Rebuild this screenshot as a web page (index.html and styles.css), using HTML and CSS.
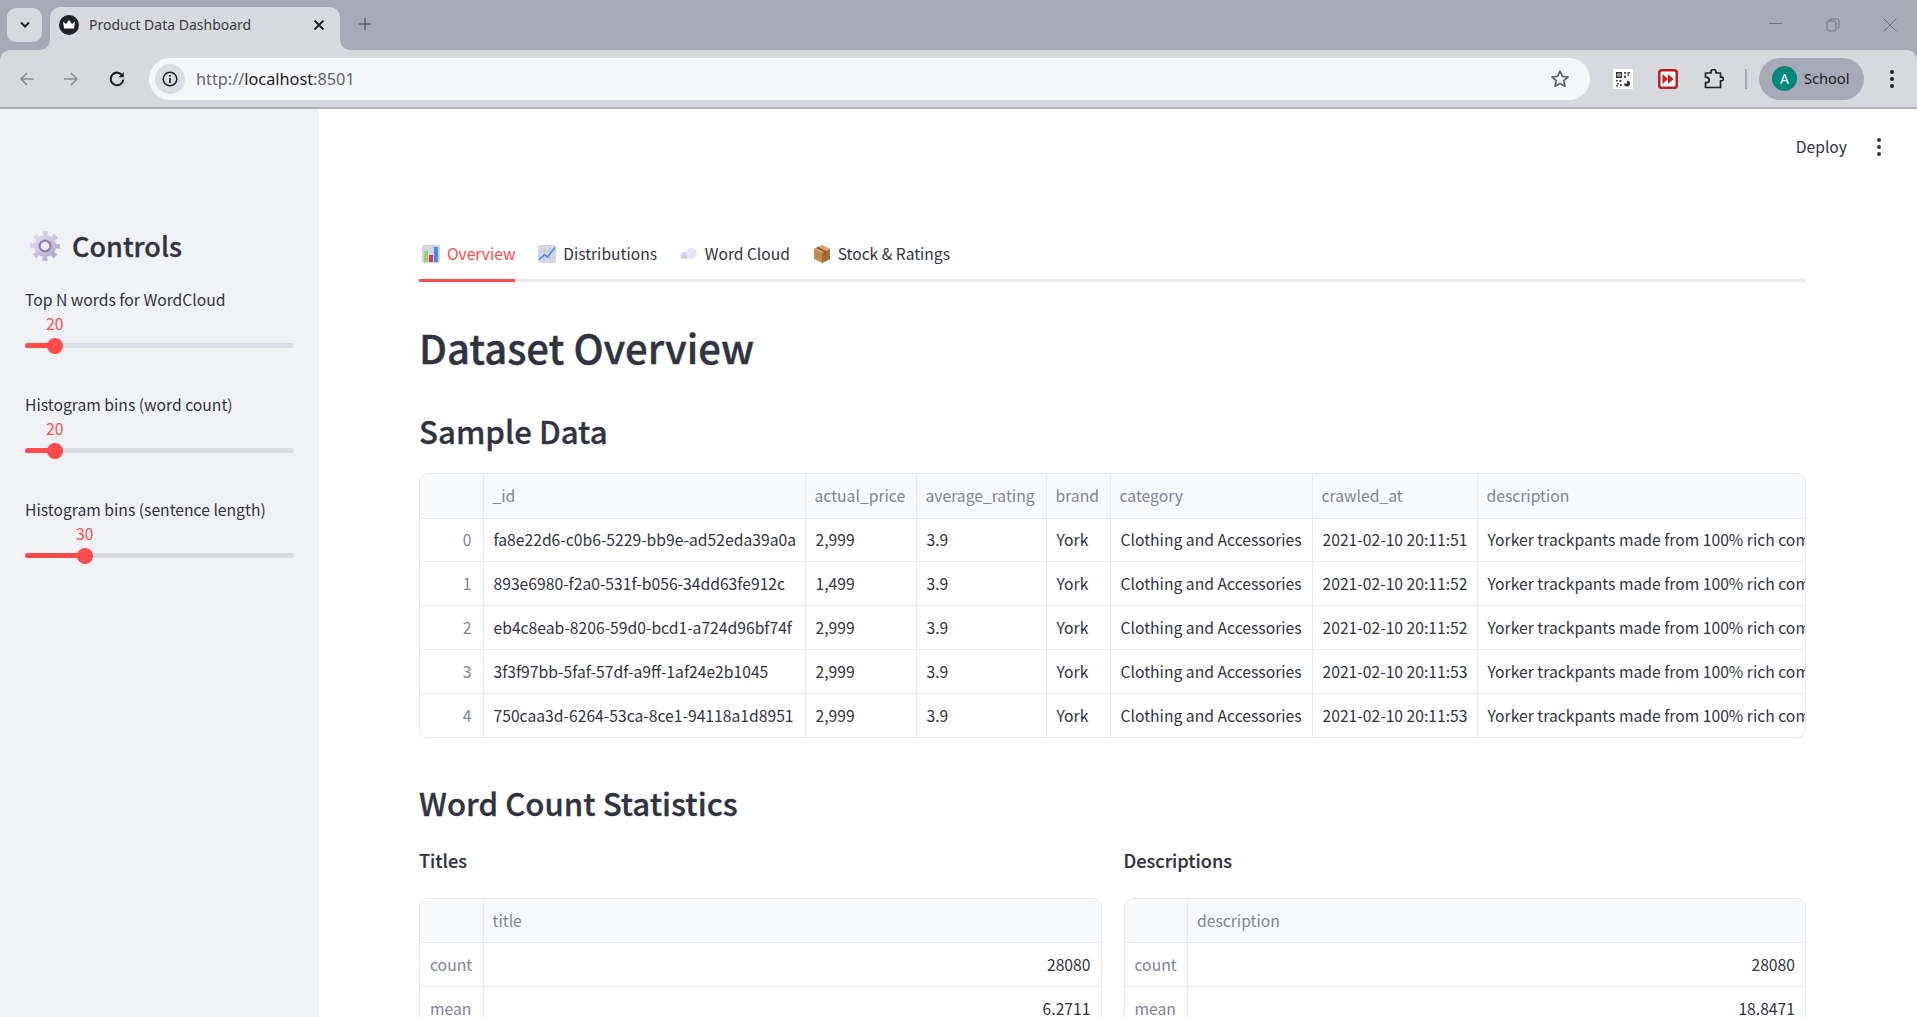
FILE: index.html
```html
<!DOCTYPE html>
<html lang="en">
<head>
<meta charset="utf-8">
<title>Product Data Dashboard</title>
<link rel="stylesheet" href="styles.css">
</head>
<body>
<div class="chrome">
  <div class="tabstrip">
    <div class="tabsearch"><svg width="12" height="8" viewBox="0 0 12 8"><path d="M2 1.500 6 5.500 10 1.500" fill="none" stroke="#202124" stroke-width="2"/></svg></div>
    <div class="tab">
      <svg class="favicon" width="20" height="20" viewBox="0 0 20 20"><circle cx="10" cy="10" r="10" fill="#20212a"/><path d="M4 6.500 7 9 10 5 13 9 16 6.500 15 13.500H5Z" fill="#fff"/></svg>
      <span class="tabtitle">Product Data Dashboard</span>
      <svg class="tabclose" width="12" height="12" viewBox="0 0 12 12"><path d="M1.500 1.500 10.500 10.500M10.500 1.500 1.500 10.500" stroke="#202124" stroke-width="1.800"/></svg>
    </div>
    <svg class="newtab" width="14" height="14" viewBox="0 0 14 14"><path d="M7 1V13M1 7H13" stroke="#5f6368" stroke-width="1.600"/></svg>
    <div class="winbtns">
      <svg width="14" height="14" viewBox="0 0 14 14"><path d="M0 5.500H13" stroke="#6f7380" stroke-width="1"/></svg>
      <svg width="14" height="14" viewBox="0 0 14 14"><rect x="1" y="3" width="9" height="10" rx="2" fill="none" stroke="#6f7380"/><path d="M3.500 3V2.500A1.500 1.500 0 0 1 5 1H11.500A1.500 1.500 0 0 1 13 2.500V9A1.500 1.500 0 0 1 11.500 10.500" fill="none" stroke="#6f7380"/></svg>
      <svg width="14" height="14" viewBox="0 0 14 14"><path d="M.5.5 13.500 13.500M13.500.5 .5 13.500" stroke="#6f7380" stroke-width="1"/></svg>
    </div>
  </div>
  <div class="toolbar">
    <svg class="nav-back" width="18" height="18" viewBox="0 0 18 18"><path d="M16 9H3M9 3 3 9 9 15" fill="none" stroke="#8b8d92" stroke-width="1.600"/></svg>
    <svg class="nav-forward" width="18" height="18" viewBox="0 0 18 18"><path d="M2 9H15M9 3 15 9 9 15" fill="none" stroke="#8b8d92" stroke-width="1.600"/></svg>
    <svg class="nav-reload" width="18" height="18" viewBox="0 0 18 18"><path d="M14.600 6A6.300 6.300 0 1 0 15.300 9.500" fill="none" stroke="#202124" stroke-width="2"/><path d="M15.800 2V7.200H10.600Z" fill="#202124"/></svg>
    <div class="omnibox">
      <div class="siteinfo"><svg width="16" height="16" viewBox="0 0 16 16"><circle cx="8" cy="8" r="6.800" fill="none" stroke="#202124" stroke-width="1.500"/><path d="M8 7V12M8 4V5.700" stroke="#202124" stroke-width="1.700"/></svg></div>
      <span class="url"><span class="urlfade">http://</span><span class="urlhost">localhost</span><span class="urlfade">:8501</span></span>
      <svg class="star" width="20" height="20" viewBox="0 0 20 20"><path d="M10 2.200 12.300 7.400 18 8 13.700 11.700 15 17.300 10 14.400 5 17.300 6.300 11.700 2 8 7.700 7.400Z" fill="none" stroke="#5f6368" stroke-width="1.700" stroke-linejoin="round"/></svg>
    </div>
    <svg class="ext ext-qr" width="20" height="20" viewBox="0 0 20 20">
      <rect width="20" height="20" rx="1" fill="#fff"/>
      <path d="M3 3H9V9H3ZM4.400 4.400V7.600H7.600V4.400Z" fill="#333" fill-rule="evenodd"/>
      <rect x="5.300" y="5.300" width="1.400" height="1.400" fill="#333"/>
      <path d="M11 3H13V5H11ZM14.500 3H17V4.500H15.800V7H14.500ZM11 6.500H13V9H11Z" fill="#555"/>
      <path d="M3 11H5V12.500H3ZM6.500 11H8.500V13H6.500ZM4 14H6V15.500H4ZM7 15H9V17H7ZM3 16H5V17.500H3Z" fill="#555"/>
      <path d="M14 11.500A3 3 0 1 1 11 14.500H14Z" fill="#333"/>
    </svg>
    <svg class="ext ext-ff" width="20" height="20" viewBox="0 0 20 20"><rect width="20" height="20" rx="3.500" fill="#b8211f"/><rect x="2.500" y="2.500" width="15" height="15" rx="1.500" fill="#fff"/><path d="M4.500 5 10 10 4.500 15ZM10 5 15.500 10 10 15Z" fill="#c9201d"/></svg>
    <svg class="ext ext-puzzle" width="20" height="20" viewBox="0 0 20 20"><path d="M1.500 4H7V3A2.500 2.500 0 0 1 12 3V4H16.500V8.200H17.500A1.800 1.800 0 0 1 17.500 11.800H16.500V18.500H1.500V13.700H2.500A2.700 2.700 0 0 0 2.500 8.300H1.500Z" fill="none" stroke="#202124" stroke-width="1.700" stroke-linejoin="round"/></svg>
    <div class="tooldivider"></div>
    <div class="profile">
      <span class="avatar">A</span>
      <span class="profilename">School</span>
    </div>
    <svg class="chromemenu" width="6" height="20" viewBox="0 0 6 20"><circle cx="3" cy="3" r="2" fill="#202124"/><circle cx="3" cy="10" r="2" fill="#202124"/><circle cx="3" cy="17" r="2" fill="#202124"/></svg>
  </div>
</div>

<div class="app">
  <aside class="sidebar">
    <div class="side-title">
      <svg class="gear" width="30" height="30" viewBox="0 0 30 30">
        <defs><linearGradient id="gearfill" x1="0" y1="0" x2="1" y2="1"><stop offset="0" stop-color="#e4dff0"/><stop offset="1" stop-color="#b3a7cd"/></linearGradient></defs>
        <circle class="gear-teeth" cx="15" cy="15" r="12.500" fill="none" stroke="url(#gearfill)" stroke-width="5" stroke-dasharray="5 4.820" stroke-dashoffset="2.500"/>
        <circle cx="15" cy="15" r="11" fill="url(#gearfill)"/>
        <circle cx="15" cy="15" r="6.500" fill="#8d7fa8"/><circle cx="15" cy="15" r="4.300" fill="#eceef4"/>
      </svg>
      <h2>Controls</h2>
    </div>
    <div class="slider">
      <label>Top N words for WordCloud</label>
      <div class="track-wrap short">
        <span class="thumbval">20</span>
        <div class="track"><div class="fill"></div><div class="thumb"></div></div>
      </div>
    </div>
    <div class="slider">
      <label>Histogram bins (word count)</label>
      <div class="track-wrap short">
        <span class="thumbval">20</span>
        <div class="track"><div class="fill"></div><div class="thumb"></div></div>
      </div>
    </div>
    <div class="slider">
      <label>Histogram bins (sentence length)</label>
      <div class="track-wrap long">
        <span class="thumbval">30</span>
        <div class="track"><div class="fill"></div><div class="thumb"></div></div>
      </div>
    </div>
  </aside>

  <main class="main">
    <header class="topbar">
      <span class="deploy">Deploy</span>
      <svg class="kebab" width="6" height="20" viewBox="0 0 6 20"><circle cx="3" cy="3" r="2" fill="#31333f"/><circle cx="3" cy="10" r="2" fill="#31333f"/><circle cx="3" cy="17" r="2" fill="#31333f"/></svg>
    </header>
    <div class="content">
      <nav class="tabs">
        <div class="st-tab active">
          <svg width="18" height="18" viewBox="0 0 18 18"><rect width="18" height="18" rx="2" fill="#d4d3de"/><rect x="2" y="6" width="4" height="11" fill="#8fd46e"/><rect x="7" y="10" width="4" height="7" fill="#e0306a"/><rect x="12" y="2" width="4" height="15" fill="#3a8fe0"/></svg>
          <span>Overview</span>
        </div>
        <div class="st-tab">
          <svg width="18" height="18" viewBox="0 0 18 18"><rect width="18" height="18" rx="2" fill="#d9d6e6"/><path d="M6 0V18M12 0V18M0 6H18M0 12H18" stroke="#c4c0d6" stroke-width=".8"/><path d="M1 15 6.500 9.500 9.500 12 17 2.500" fill="none" stroke="#3a8fe0" stroke-width="1.600"/></svg>
          <span>Distributions</span>
        </div>
        <div class="st-tab">
          <svg width="18" height="18" viewBox="0 0 18 18"><ellipse cx="5" cy="10.500" rx="4.500" ry="3.500" fill="#d3cfea"/><circle cx="11.500" cy="8.500" r="5.500" fill="#e6e4f4"/></svg>
          <span>Word Cloud</span>
        </div>
        <div class="st-tab">
          <svg width="18" height="18" viewBox="0 0 18 18"><path d="M9 0 17 4V14L9 18 1 14V4Z" fill="#c08a55"/><path d="M9 8 17 4V14L9 18Z" fill="#a36c3a"/><path d="M1 4 9 0 17 4 9 8Z" fill="#d8a875"/><path d="M5 2 13 6V9L11 10V7L3 3Z" fill="#8a5a30"/></svg>
          <span>Stock &amp; Ratings</span>
        </div>
      </nav>

      <h1>Dataset Overview</h1>
      <h2 class="sec first">Sample Data</h2>

      <div class="frame">
        <table class="sample">
          <colgroup>
            <col class="c-idx"><col class="c-id"><col class="c-price"><col class="c-rating"><col class="c-brand"><col class="c-cat"><col class="c-crawl"><col class="c-desc">
          </colgroup>
          <thead><tr><th></th><th>_id</th><th>actual_price</th><th>average_rating</th><th>brand</th><th>category</th><th>crawled_at</th><th>description</th></tr></thead>
          <tbody>
            <tr><th>0</th><td>fa8e22d6-c0b6-5229-bb9e-ad52eda39a0a</td><td>2,999</td><td>3.9</td><td>York</td><td>Clothing and Accessories</td><td>2021-02-10 20:11:51</td><td>Yorker trackpants made from 100% rich combed cotton</td></tr>
            <tr><th>1</th><td>893e6980-f2a0-531f-b056-34dd63fe912c</td><td>1,499</td><td>3.9</td><td>York</td><td>Clothing and Accessories</td><td>2021-02-10 20:11:52</td><td>Yorker trackpants made from 100% rich combed cotton</td></tr>
            <tr><th>2</th><td>eb4c8eab-8206-59d0-bcd1-a724d96bf74f</td><td>2,999</td><td>3.9</td><td>York</td><td>Clothing and Accessories</td><td>2021-02-10 20:11:52</td><td>Yorker trackpants made from 100% rich combed cotton</td></tr>
            <tr><th>3</th><td>3f3f97bb-5faf-57df-a9ff-1af24e2b1045</td><td>2,999</td><td>3.9</td><td>York</td><td>Clothing and Accessories</td><td>2021-02-10 20:11:53</td><td>Yorker trackpants made from 100% rich combed cotton</td></tr>
            <tr><th>4</th><td>750caa3d-6264-53ca-8ce1-94118a1d8951</td><td>2,999</td><td>3.9</td><td>York</td><td>Clothing and Accessories</td><td>2021-02-10 20:11:53</td><td>Yorker trackpants made from 100% rich combed cotton</td></tr>
          </tbody>
        </table>
      </div>

      <h2 class="sec second">Word Count Statistics</h2>

      <div class="columns">
        <section>
          <h3>Titles</h3>
          <div class="frame">
            <table class="stats">
              <colgroup><col class="c-idx"><col></colgroup>
              <thead><tr><th></th><th>title</th></tr></thead>
              <tbody>
                <tr><th>count</th><td>28080</td></tr>
                <tr><th>mean</th><td>6.2711</td></tr>
              </tbody>
            </table>
          </div>
        </section>
        <section>
          <h3>Descriptions</h3>
          <div class="frame">
            <table class="stats">
              <colgroup><col class="c-idx"><col></colgroup>
              <thead><tr><th></th><th>description</th></tr></thead>
              <tbody>
                <tr><th>count</th><td>28080</td></tr>
                <tr><th>mean</th><td>18.8471</td></tr>
              </tbody>
            </table>
          </div>
        </section>
      </div>
    </div>
  </main>
</div>
</body>
</html>
```
FILE: styles.css
```css
* { box-sizing: border-box; }
html, body { margin: 0; height: 100%; overflow: hidden; }
body { display: flex; flex-direction: column; background: #fff; font-family: "Noto Sans CJK SC", "Noto Sans", sans-serif; color: #31333f; }

/* browser chrome */
.chrome { flex: none; height: 109px; background: #a7aab6; font-family: "Noto Sans", "Liberation Sans", sans-serif; border-bottom: 2px solid #b0b1b8; }
.tabstrip { height: 50px; display: flex; align-items: flex-start; padding: 8px 0 0 7px; }
.tabsearch { flex: none; width: 35px; height: 34px; background: #d7d9df; border-radius: 9px; display: flex; align-items: center; justify-content: center; }
.tab { flex: none; width: 290px; height: 43px; margin: -1px 0 0 8px; background: #d7d9df; border-radius: 10px 10px 0 0; display: flex; align-items: center; padding: 0 15px 7px 9px; position: relative; }
.tab::before, .tab::after { content: ""; position: absolute; bottom: 0; width: 10px; height: 10px; background: radial-gradient(circle at 0 0, transparent 9.500px, #d7d9df 10px); }
.tab::before { left: -10px; }
.tab::after { right: -10px; background: radial-gradient(circle at 100% 0, transparent 9.500px, #d7d9df 10px); }
.favicon { flex: none; }
.tabtitle { margin-left: 10px; flex: 1; font-size: 14px; line-height: 20px; color: #3a3b40; white-space: nowrap; }
.tabclose { flex: none; }
.newtab { flex: none; margin: 9px 0 0 18px; }
.winbtns { margin-left: auto; display: flex; gap: 43px; padding: 10px 20px 0 0; }
.toolbar { height: 57px; background: #d7d9df; border-radius: 10px 10px 0 0; display: flex; align-items: center; padding: 0 22px 0 18px; }
.nav-back, .nav-forward, .nav-reload { flex: none; }
.nav-back { margin-right: 26px; }
.nav-forward { margin-right: 28px; }
.omnibox { flex: 1; height: 42px; margin-left: 23px; background: #f5f6f8; border-radius: 21px; display: flex; align-items: center; padding: 0 20px 0 6px; }
.siteinfo { flex: none; width: 30px; height: 30px; border-radius: 50%; background: #dcdde2; display: flex; align-items: center; justify-content: center; }
.url { margin-left: 11px; font-size: 16.3px; line-height: 24px; flex: 1; }
.urlfade { color: #5f6672; }
.urlhost { color: #202124; }
.star { flex: none; }
.ext { flex: none; }
.ext-qr { margin-left: 23px; }
.ext-ff { margin-left: 25px; }
.ext-puzzle { margin-left: 26px; }
.tooldivider { flex: none; width: 2px; height: 20px; background: #a7aab6; margin: 0 12px 0 21px; }
.profile { flex: none; width: 105px; height: 42px; border-radius: 21px; background: #a7aab6; display: flex; align-items: center; padding-left: 13px; }
.avatar { width: 25px; height: 25px; border-radius: 50%; background: #00897b; color: #fff; font-size: 14px; line-height: 25px; text-align: center; }
.profilename { margin: 0 0 2px 7px; font-size: 14.6px; line-height: 20px; color: #202124; }
.chromemenu { flex: none; margin-left: 25px; }

/* app */
.app { flex: 1; display: flex; min-height: 0; }
.sidebar { flex: none; width: 319px; background: #f0f2f6; padding: 0 25px; overflow: hidden; }
.side-title { display: flex; align-items: center; height: 40px; margin-top: 117px; padding-left: 5px; }
.gear { flex: none; }
.side-title h2 { margin: 0 0 0 12px; font-size: 27px; line-height: 40px; font-weight: 500; color: #31333f; -webkit-text-stroke: .3px #31333f; }
.slider { height: 105px; }
.side-title + .slider { margin-top: 22px; }
.slider label { display: block; font-size: 15.7px; line-height: 24px; color: #31333f; }
.track-wrap { position: relative; height: 40px; }
.thumbval { position: absolute; top: 3px; font-size: 15.7px; line-height: 18px; color: #ff4b4b; }
.track { position: absolute; left: 0; right: 0; top: 31px; height: 5px; border-radius: 3px; background: #d9dde6; }
.fill { height: 100%; background: #ff4b4b; border-radius: 3px 0 0 3px; }
.thumb { position: absolute; top: -5.500px; width: 16px; height: 16px; border-radius: 50%; background: #ff4b4b; }
.short .thumbval { left: 21px; }
.short .fill { width: 30px; }
.short .thumb { left: 22px; }
.long .thumbval { left: 51px; }
.long .fill { width: 60px; }
.long .thumb { left: 52px; }

.main { flex: 1; min-width: 0; overflow: hidden; display: flex; flex-direction: column; }
.topbar { flex: none; height: 60px; display: flex; align-items: center; justify-content: flex-end; padding: 16px 35px 0 0; }
.deploy { font-size: 15.7px; line-height: 24px; color: #31333f; }
.kebab { margin-left: 29px; }
.content { padding: 0 111px 0 100px; flex: none; }

.tabs { display: flex; height: 40px; margin-top: 73px; gap: 22.8px; border-bottom: 3px solid #ebebec; align-items: flex-start; }
.st-tab { display: flex; align-items: flex-start; height: 40px; font-size: 15.6px; line-height: 24px; gap: 7px; color: #31333f; }
.st-tab span { margin-top: -1px; }
.st-tab svg { margin-top: 3px; flex: none; }
.st-tab.active { color: #ff4b4b; border-bottom: 3px solid #ff4b4b; padding-left: 3px; }

h1 { margin: 35px 0 0; font-size: 40px; line-height: 60px; font-weight: 500; color: #31333f; -webkit-text-stroke: .4px #31333f; }
h2.sec { margin: 0; font-size: 31.2px; line-height: 44px; font-weight: 500; color: #31333f; -webkit-text-stroke: .3px #31333f; }
h2.first { margin-top: 32px; }
h2.second { margin-top: 43px; }
h3 { margin: 0; font-size: 18.2px; line-height: 28px; font-weight: 500; color: #31333f; -webkit-text-stroke: .2px #31333f; }

.frame { border: 1px solid #e8e9ec; border-radius: 9px; overflow: hidden; margin-top: 20px; }
.columns .frame { margin-top: 24px; }
table { border-collapse: collapse; width: 100%; table-layout: fixed; font-size: 15.7px; }
th, td { height: 43.800px; padding: 0 8px 0 10px; border: 1px solid #eaebee; font-weight: 400; white-space: nowrap; overflow: hidden; text-align: left; color: #31333f; line-height: 24px; }
tbody th, tbody td { padding-top: 1px; }
tr > :first-child { border-left: 0; }
tr > :last-child { border-right: 0; }
tbody tr:last-child > * { border-bottom: 0; }
thead tr > * { border-top: 0; height: 44px; padding-left: 9px; background: #f8f9fb; color: #808495; }
tbody th { color: #808495; text-align: right; padding-right: 11px; }

.c-idx { width: 63px; }
.c-id { width: 322px; }
.c-price { width: 111px; }
.c-rating { width: 130px; }
.c-brand { width: 64px; }
.c-cat { width: 202px; }
.c-crawl { width: 165px; }
.c-desc { width: 328px; }

.columns { display: grid; grid-template-columns: 1fr 1fr; gap: 22px; margin-top: 21px; }
.stats td { text-align: right; padding-right: 10px; }
.stats thead th { text-align: left; }
.stats tbody th { text-align: left; padding-left: 10px; }
```
